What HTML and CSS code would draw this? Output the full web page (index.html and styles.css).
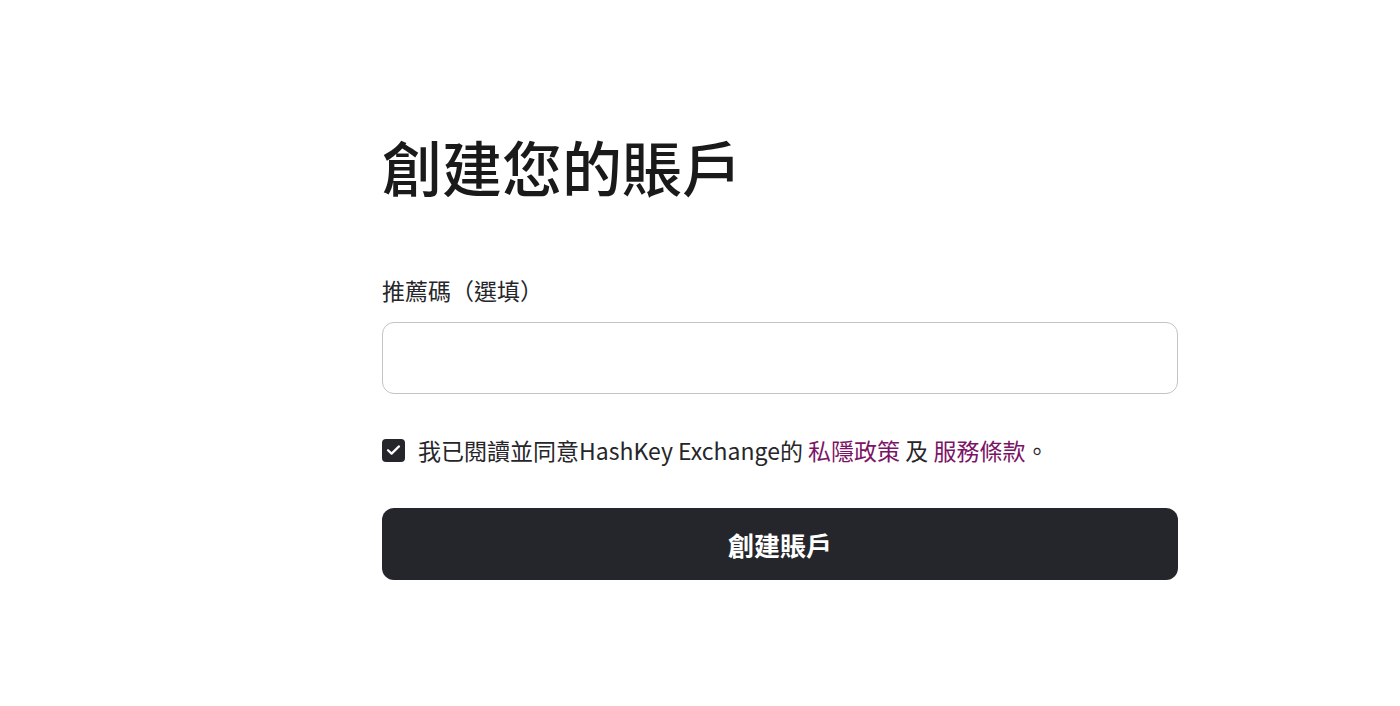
FILE: index.html
```html
<!DOCTYPE html>
<html lang="zh-Hant">
<head>
<meta charset="utf-8">
<title>創建您的賬戶</title>
<link rel="stylesheet" href="styles.css">
</head>
<body>
<main class="page">
  <section class="form">
    <h1 class="title">創建您的賬戶</h1>
    <label class="label" for="ref">推薦碼（選填）</label>
    <input class="input" id="ref" type="text">
    <div class="agree">
      <span class="check">
        <svg width="15" height="12" viewBox="0 0 15 12"><path d="M2 6.2 L5.6 9.6 L13 2.4" fill="none" stroke="#fff" stroke-width="2.2" stroke-linecap="round" stroke-linejoin="round"/></svg>
      </span>
      <p class="agree-text">我已閱讀並同意HashKey Exchange的 <a class="link" href="#">私隱政策</a> 及 <a class="link" href="#">服務條款</a>。</p>
    </div>
    <button class="btn" type="button">創建賬戶</button>
  </section>
</main>
</body>
</html>
```

FILE: styles.css
```css
html, body {
  margin: 0;
  padding: 0;
  background: #ffffff;
}
body {
  font-family: "Noto Sans CJK TC", "Noto Sans", sans-serif;
  color: #1d1d1f;
}
.page {
  padding: 126px 0 0 382px;
}
.form {
  width: 796px;
  display: flex;
  flex-direction: column;
}
.title {
  margin: 0;
  font-size: 60px;
  line-height: 80px;
  font-weight: 500;
  color: #1a1a1a;
}
.label {
  margin-top: 68px;
  font-size: 23px;
  line-height: 32px;
  color: #26262a;
}
.input {
  margin-top: 16px;
  height: 72px;
  box-sizing: border-box;
  border: 1.5px solid #c4c4c8;
  border-radius: 12px;
  padding: 0 18px;
  font-size: 20px;
  font-family: inherit;
  outline: none;
}
.agree {
  margin-top: 40px;
  display: flex;
  align-items: center;
  gap: 13px;
}
.check {
  width: 23px;
  height: 23px;
  border-radius: 4px;
  background: #25262b;
  display: flex;
  align-items: center;
  justify-content: center;
}
.agree-text {
  margin: 0;
  font-size: 23px;
  line-height: 32px;
  color: #26262a;
}
.link {
  color: #7b1466;
  text-decoration: none;
}
.btn {
  margin-top: 42px;
  height: 72px;
  border: none;
  border-radius: 12px;
  background: #25262b;
  color: #ffffff;
  font-family: inherit;
  font-size: 26px;
  font-weight: 700;
  cursor: pointer;
}
```
